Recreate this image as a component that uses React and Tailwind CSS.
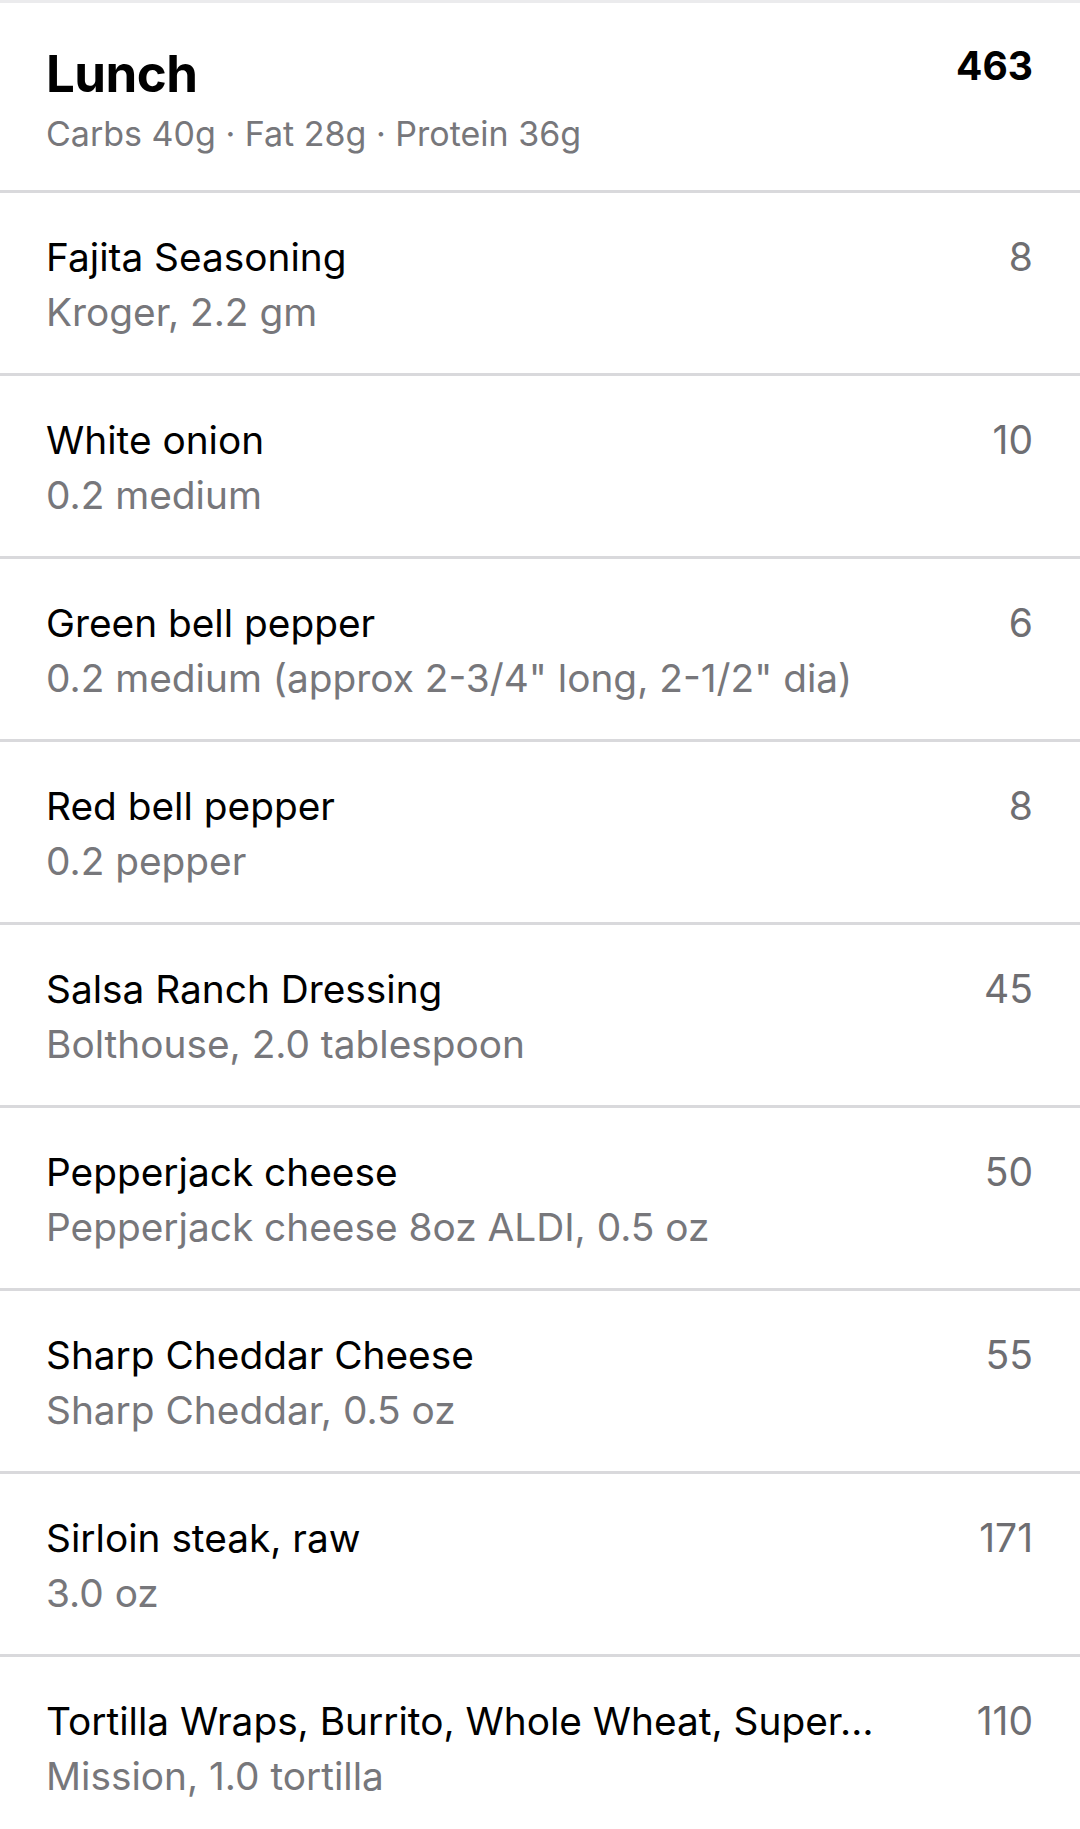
import React from 'react';

const items = [
  { name: 'Fajita Seasoning', detail: 'Kroger, 2.2 gm', cal: 8 },
  { name: 'White onion', detail: '0.2 medium', cal: 10 },
  { name: 'Green bell pepper', detail: '0.2 medium (approx 2-3/4" long, 2-1/2" dia)', cal: 6 },
  { name: 'Red bell pepper', detail: '0.2 pepper', cal: 8 },
  { name: 'Salsa Ranch Dressing', detail: 'Bolthouse, 2.0 tablespoon', cal: 45 },
  { name: 'Pepperjack cheese', detail: 'Pepperjack cheese 8oz ALDI, 0.5 oz', cal: 50 },
  { name: 'Sharp Cheddar Cheese', detail: 'Sharp Cheddar, 0.5 oz', cal: 55 },
  { name: 'Sirloin steak, raw', detail: '3.0 oz', cal: 171 },
  { name: 'Tortilla Wraps, Burrito, Whole Wheat, Super…', detail: 'Mission, 1.0 tortilla', cal: 110 },
];

export default function App() {
  return (
    <div className="min-h-screen bg-white font-['Inter','Liberation_Sans',sans-serif] border-t-[3px] border-[#ebebed]">
      {/* Meal header */}
      <div className="flex items-start justify-between pl-[46px] pr-[47px] pt-[39px] pb-[28px] border-b-[3px] border-[#d9d9dc]">
        <div>
          <h1 className="text-[51px] leading-[64px] font-bold text-black tracking-[-0.5px]">Lunch</h1>
          <p className="text-[34px] leading-[56px] text-[#77777b]">
            Carbs 40g · Fat 28g · Protein 36g
          </p>
        </div>
        <span className="text-[39px] leading-[48px] font-bold text-black">463</span>
      </div>

      {items.map((item) => (
        <FoodRow key={item.name} {...item} />
      ))}
    </div>
  );
}

function FoodRow({ name, detail, cal }) {
  return (
    <div className="flex items-start justify-between gap-8 pl-[46px] pr-[47px] pt-[36px] pb-[33px] border-b-[3px] border-[#d9d9dc]">
      <div className="min-w-0">
        <div className="text-[38.8px] leading-[55px] text-black truncate">{name}</div>
        <div className="text-[38.8px] leading-[56px] text-[#77777b] truncate">{detail}</div>
      </div>
      <span className="text-[39px] leading-[55px] text-[#6e6e72] shrink-0">{cal}</span>
    </div>
  );
}
